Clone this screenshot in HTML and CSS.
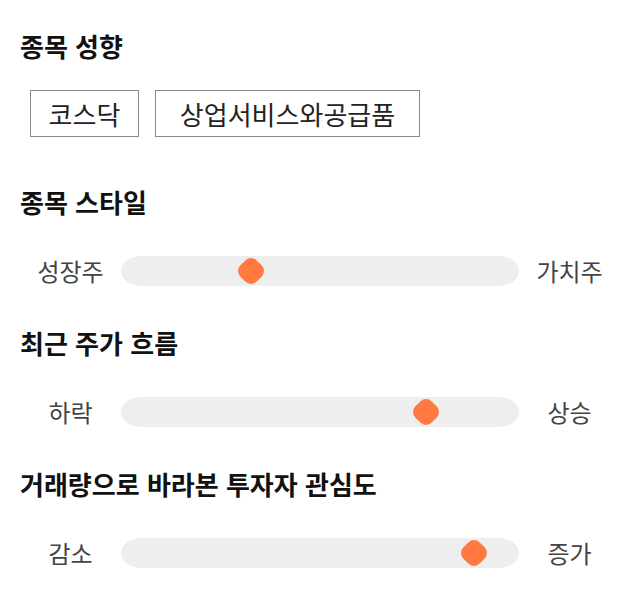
FILE: index.html
```html
<!DOCTYPE html>
<html lang="ko">
<head>
<meta charset="utf-8">
<link rel="stylesheet" href="styles.css">
</head>
<body>
<main class="page">
  <section class="block">
    <h2 class="title">종목 성향</h2>
    <div class="chips">
      <span class="chip chip-short">코스닥</span>
      <span class="chip chip-long">상업서비스와공급품</span>
    </div>
  </section>
  <section class="block">
    <h2 class="title">종목 스타일</h2>
    <div class="slider">
      <span class="label">성장주</span>
      <div class="track"><span class="thumb" style="left: 32.7%"></span></div>
      <span class="label">가치주</span>
    </div>
  </section>
  <section class="block">
    <h2 class="title">최근 주가 흐름</h2>
    <div class="slider">
      <span class="label">하락</span>
      <div class="track"><span class="thumb" style="left: 76.6%"></span></div>
      <span class="label">상승</span>
    </div>
  </section>
  <section class="block">
    <h2 class="title">거래량으로 바라본 투자자 관심도</h2>
    <div class="slider">
      <span class="label">감소</span>
      <div class="track"><span class="thumb" style="left: 88.7%"></span></div>
      <span class="label">증가</span>
    </div>
  </section>
</main>
</body>
</html>
```

FILE: styles.css
```css
* { box-sizing: border-box; }
html, body { margin: 0; padding: 0; background: #fff; }
body {
  font-family: "Noto Sans CJK KR", "Noto Sans", sans-serif;
  color: #222;
}
.page {
  padding: 31px 20px 0 20px;
  display: flex;
  flex-direction: column;
}
.block { display: flex; flex-direction: column; }
.block + .block { margin-top: 42px; }
.block:nth-child(2) { margin-top: 50px; }
.title {
  margin: 0;
  font-size: 26px;
  line-height: 30px;
  font-weight: 700;
  color: #111;
}
.chips {
  margin-top: 29px;
  display: flex;
  gap: 16px;
  padding-left: 10px;
}
.chip {
  display: flex;
  align-items: center;
  justify-content: center;
  height: 47px;
  border: 1px solid #8a8a8a;
  font-size: 26px;
  line-height: 30px;
  color: #222;
}
.chip-short { width: 109px; }
.chip-long { width: 265px; }
.slider {
  margin-top: 39px;
  display: flex;
  align-items: center;
  height: 30px;
}
.label {
  width: 101px;
  flex: none;
  text-align: center;
  font-size: 24px;
  line-height: 30px;
  color: #444;
}
.track {
  position: relative;
  flex: 1;
  height: 30px;
  background: #eeeeee;
  border-radius: 20px / 15px;
}
.thumb {
  position: absolute;
  top: 50%;
  width: 23px;
  height: 23px;
  background: #ff7940;
  border-radius: 8px;
  transform: translate(-50%, -50%) rotate(45deg);
}
```
